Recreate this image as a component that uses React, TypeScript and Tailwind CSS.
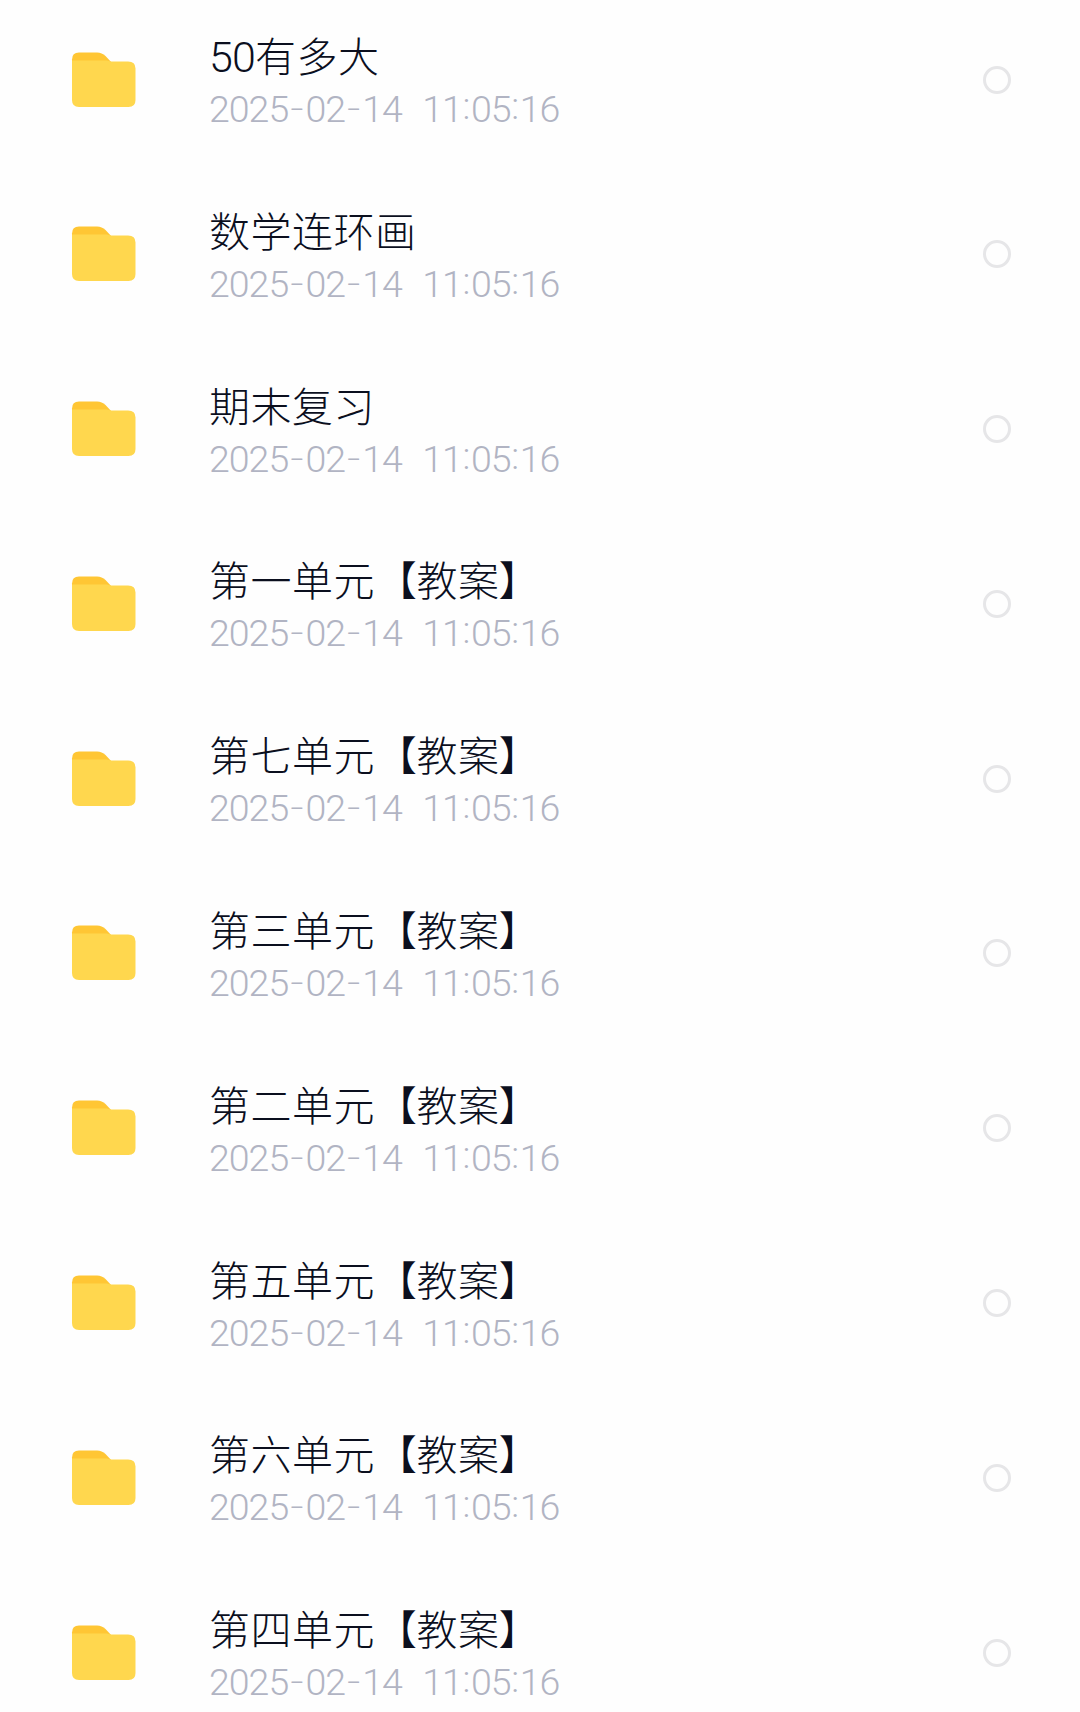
const items = [
  "50有多大",
  "数学连环画",
  "期末复习",
  "第一单元【教案】",
  "第七单元【教案】",
  "第三单元【教案】",
  "第二单元【教案】",
  "第五单元【教案】",
  "第六单元【教案】",
  "第四单元【教案】",
];

const STAMP = "2025-02-14 11:05:16";

function Folder() {
  return (
    <svg className="h-[58px] w-[66px] shrink-0" viewBox="0 0 66 58">
      <path d="M1 24V8.500Q1 1.500 8 1.500H26Q31 1.500 34.500 5L42 13V24Z" fill="#ffc634" />
      <path d="M1 9.500H36L40 10.500H57Q64.500 10.500 64.500 17.500V49Q64.500 56 57.500 56H8Q1 56 1 49Z" fill="#ffd74e" />
    </svg>
  );
}

function cell(c: string) {
  if (c === "-") return "inline-block w-[17.2px] text-center font-['Inter'] font-extralight";
  if (c === ":") return "inline-block w-[9.200px] text-center";
  if (c === " ") return "inline-block w-[20.500px] whitespace-pre";
  return "inline-block w-[19.800px] text-center";
}

function Stamp() {
  return (
    <div className="flex h-[40px] items-center font-['Roboto'] text-[37.5px] leading-[40px] font-light text-[#b1b4c3]">
      {STAMP.split("").map((c, i) => (
        <span key={i} className={cell(c)}>
          <span className={c === "-" ? "relative -top-[1px]" : c === ":" ? "relative -top-[3px]" : ""}>{c}</span>
        </span>
      ))}
    </div>
  );
}

function Title({ text }: { text: string }) {
  return (
    <div className="h-[66px] text-[41px] leading-[62px] font-light tracking-[0.5px] whitespace-nowrap text-[#0b0f1e] [font-family:'Noto_Sans_CJK_SC',sans-serif]">
      {text.split("").map((c, i) => {
        if (c === "5" || c === "0")
          return (
            <span key={i} className="inline-block w-[23px] text-center font-['Roboto'] text-[43px] leading-none font-light tracking-normal">
              {c}
            </span>
          );
        if (c === "【") return <span key={i} className="relative left-[1px]">{c}</span>;
        if (c === "】") return <span key={i} className="relative -left-[1px]">{c}</span>;
        return <span key={i}>{c}</span>;
      })}
    </div>
  );
}

export default function App() {
  return (
    <main className="h-[1712px] w-[1080px] overflow-hidden bg-[#fefefe]">
      {items.map((t) => (
        <div key={t} className="flex h-[174.8px] pl-[71px]">
          <div className="pt-[50.5px]">
            <Folder />
          </div>
          <div className="ml-[72px] flex-1 pt-[23px]">
            <Title text={t} />
            <Stamp />
          </div>
          <div className="mt-[65.5px] mr-[69px] size-[28px] rounded-full border-[3px] border-[#e6e6e8]" />
        </div>
      ))}
    </main>
  );
}
